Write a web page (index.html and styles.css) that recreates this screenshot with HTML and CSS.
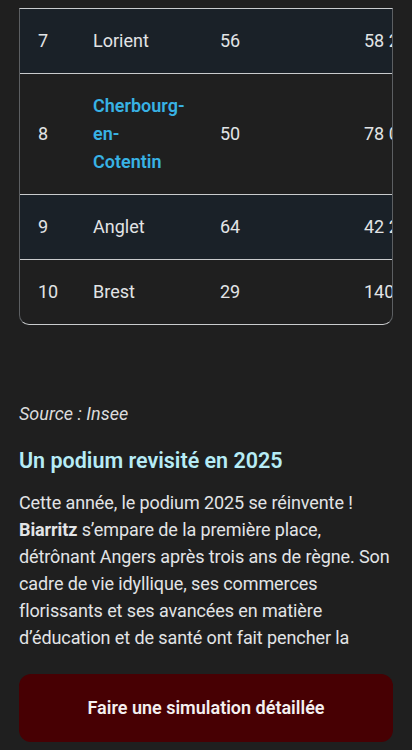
FILE: index.html
```html
<!DOCTYPE html>
<html lang="fr">
<head>
    <meta charset="UTF-8">
    <title>Classement des villes 2025</title>
    <link rel="stylesheet" href="styles.css">
</head>
<body>
    <div class="table-wrap">
        <table class="ranking">
            <colgroup>
                <col class="c-rank">
                <col class="c-city">
                <col class="c-score">
                <col class="c-price">
            </colgroup>
            <tbody>
                <tr class="odd">
                    <td>7</td>
                    <td>Lorient</td>
                    <td>56</td>
                    <td>58 200 €</td>
                </tr>
                <tr>
                    <td>8</td>
                    <td><a href="#cherbourg">Cherbourg-en-Cotentin</a></td>
                    <td>50</td>
                    <td>78 000 €</td>
                </tr>
                <tr class="odd">
                    <td>9</td>
                    <td>Anglet</td>
                    <td>64</td>
                    <td>42 200 €</td>
                </tr>
                <tr>
                    <td>10</td>
                    <td>Brest</td>
                    <td>29</td>
                    <td>140 500 €</td>
                </tr>
            </tbody>
        </table>
    </div>

    <p class="source">Source : Insee</p>

    <h2>Un podium revisité en 2025</h2>
    <p class="text">Cette année, le podium 2025 se réinvente ! <b>Biarritz</b> s’empare de la première place, détrônant Angers après trois ans de règne. Son cadre de vie idyllique, ses commerces florissants et ses avancées en matière d’éducation et de santé ont fait pencher la</p>

    <!-- call to action under the article -->
    <div class="cta-bar">
        <a class="cta" href="#simulation">Faire une simulation détaillée</a>
    </div>
</body>
</html>
```

FILE: styles.css
```css
body {
    margin: 0;
    padding: 8px 19px 9px;
    background-color: #1f1f1f;
    color: #e2e4e6;
    font-family: Roboto, "Noto Sans", sans-serif;
    font-size: 18px;
    line-height: 27px;
}

.table-wrap {
    border: 1px solid #5c5f62;
    border-top: 1px solid #c9cbcd;
    border-bottom: 1px solid #c9cbcd;
    border-radius: 0 0 10px 10px;
    overflow: hidden;
}
.ranking {
    table-layout: fixed;
    width: 450px;
    border-collapse: collapse;
}
.c-rank { width: 55px; }
.c-city { width: 127px; }
.c-score { width: 144px; }
.c-price { width: 124px; }

.ranking td {
    padding: 18px 18px;
    line-height: 28px;
    vertical-align: middle;
}
.ranking tr + tr td {
    border-top: 1px solid #c9cbcd;
}
.ranking td:last-child {
    white-space: nowrap;
}
.ranking tr.odd {
    background-color: #1a2128;
}
.ranking a {
    color: #38b2e4;
    font-weight: 600;
    text-decoration: none;
}

.source {
    margin: 75px 0 0;
    font-style: italic;
    color: #dcdcdc;
}
h2 {
    margin: 19px 0 0;
    font-size: 21.5px;
    line-height: 30px;
    font-weight: 600;
    color: #b6ecf6;
}
.text {
    margin: 13px 0 0;
    letter-spacing: -0.1px;
}
.text b {
    font-weight: 700;
}

.cta-bar {
    padding-top: 23px;
}
.cta {
    display: block;
    height: 68px;
    line-height: 68px;
    border-radius: 12px;
    background-color: #470003;
    color: #f4f0f0;
    text-align: center;
    font-weight: 600;
    text-decoration: none;
}
```
